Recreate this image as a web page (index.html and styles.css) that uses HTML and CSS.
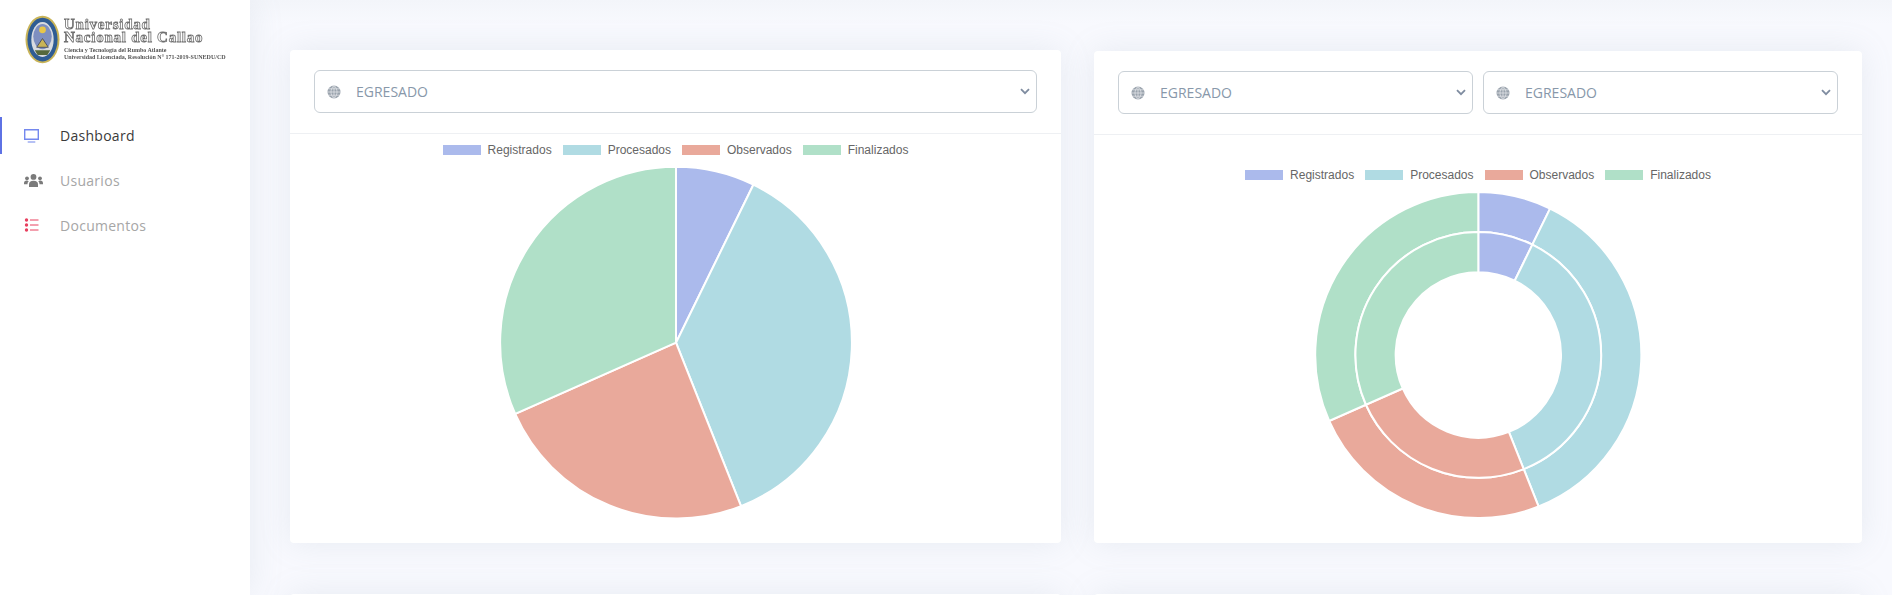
FILE: index.html
```html
<!DOCTYPE html>
<html lang="es">
<head>
<meta charset="utf-8">
<title>Dashboard</title>
<link rel="stylesheet" href="styles.css">
</head>
<body>
<div class="app">
  <aside class="sidebar">
    <div class="brand">
      <svg class="crest" width="35" height="49" viewBox="0 0 36 50">
        <ellipse cx="18" cy="25" rx="17.500" ry="24.500" fill="#c9b458"/>
        <ellipse cx="18" cy="25" rx="15.500" ry="22.500" fill="#2f5c93"/>
        <ellipse cx="18" cy="25" rx="11.500" ry="18" fill="#d8dbe0"/>
        <ellipse cx="18" cy="22" rx="9.500" ry="13" fill="#7e8fc0"/>
        <circle cx="18" cy="15" r="3.500" fill="#e7c64a"/>
        <path d="M18 24l6 9H12z" fill="#c9b458" stroke="#3a3f55" stroke-width=".8"/>
        <path d="M10 36h16l-3 5h-10z" fill="#55683c"/>
      </svg>
      <div class="brand-text">
        <div class="brand-title">Universidad<br>Nacional del Callao</div>
        <div class="brand-sub">Ciencia y Tecnología del Rumbo Atlante<br>Universidad Licenciada, Resolución N° 171-2019-SUNEDU/CD</div>
      </div>
    </div>
    <nav class="nav">
      <a class="nav-item active">
        <svg class="nav-icon" height="14" viewBox="0 0 36 14" preserveAspectRatio="xMinYMid meet"><path d="M.7.7h13.600v9.600H.7z" fill="#fff" stroke="#7488ee" stroke-width="1.400"/><path d="M3.700 13h7.600" stroke="#8fa0f0" stroke-width="1.300"/></svg>
        <span>Dashboard</span>
      </a>
      <a class="nav-item">
        <svg class="nav-icon" height="13" viewBox="0 0 36 13" preserveAspectRatio="xMinYMid meet" fill="#7b7b7b"><circle cx="9.500" cy="2.900" r="2.900"/><circle cx="3" cy="4.300" r="1.900"/><circle cx="16" cy="4.300" r="1.900"/><path d="M5 13v-2.800C5 8 6.500 6.700 9.500 6.700S14 8 14 10.200V13z"/><path d="M0 9.500C0 7.500 1 6.600 2.800 6.600c.9 0 1.400.3 1.900.7-.9.8-1.200 1.800-1.200 3H0zM19 9.500c0-2-1-2.900-2.800-2.900-.9 0-1.400.3-1.900.7.9.8 1.200 1.800 1.200 3H19z"/></svg>
        <span>Usuarios</span>
      </a>
      <a class="nav-item">
        <svg class="nav-icon" height="14" viewBox="0 0 36 14" preserveAspectRatio="xMinYMid meet"><g fill="#e8405f"><circle cx="2.500" cy="2" r="1.700"/><circle cx="2.500" cy="7" r="1.700"/><circle cx="2.500" cy="12" r="1.700"/></g><path d="M6 2h8.500M6 7h8.500M6 12h8.500" stroke="#e8405f" stroke-width="1"/></svg>
        <span>Documentos</span>
      </a>
    </nav>
  </aside>
  <main class="main">
    <section class="card card-left">
      <header class="card-head">
        <div class="field">
          <svg class="globe" width="14" height="14" viewBox="0 0 14 14"><use href="#globe"/></svg>
          <select class="select"><option>EGRESADO</option></select>
          <svg class="chev" width="10" height="7" viewBox="0 0 10 7"><path d="M1 1.200l4 4 4-4" fill="none" stroke="#7f8ca0" stroke-width="1.800"/></svg>
        </div>
      </header>
      <div class="chart chart-pie">
        <ul class="legend">
          <li><i class="sw blue"></i>Registrados</li>
          <li><i class="sw teal"></i>Procesados</li>
          <li><i class="sw salmon"></i>Observados</li>
          <li><i class="sw green"></i>Finalizados</li>
        </ul>
        <svg class="plot-pie" width="360" height="360" viewBox="-180 -179.700 360 360">
          <g stroke="#fff" stroke-width="2" transform="scale(1.005)">
            <path class="f-blue" d="M0 0V-175A175 175 0 0 1 77 -157.200Z"/>
            <path class="f-teal" d="M0 0L77 -157.200A175 175 0 0 1 64.700 162.600Z"/>
            <path class="f-salmon" d="M0 0L64.700 162.600A175 175 0 0 1 -160 70.900Z"/>
            <path class="f-green" d="M0 0L-160 70.900A175 175 0 0 1 0 -175Z"/>
          </g>
        </svg>
      </div>
    </section>
    <section class="card card-right">
      <header class="card-head two">
        <div class="field">
          <svg class="globe" width="14" height="14" viewBox="0 0 14 14"><use href="#globe"/></svg>
          <select class="select"><option>EGRESADO</option></select>
          <svg class="chev" width="10" height="7" viewBox="0 0 10 7"><path d="M1 1.200l4 4 4-4" fill="none" stroke="#7f8ca0" stroke-width="1.800"/></svg>
        </div>
        <div class="field">
          <svg class="globe" width="14" height="14" viewBox="0 0 14 14"><use href="#globe"/></svg>
          <select class="select"><option>EGRESADO</option></select>
          <svg class="chev" width="10" height="7" viewBox="0 0 10 7"><path d="M1 1.200l4 4 4-4" fill="none" stroke="#7f8ca0" stroke-width="1.800"/></svg>
        </div>
      </header>
      <div class="chart chart-donut">
        <ul class="legend">
          <li><i class="sw blue"></i>Registrados</li>
          <li><i class="sw teal"></i>Procesados</li>
          <li><i class="sw salmon"></i>Observados</li>
          <li><i class="sw green"></i>Finalizados</li>
        </ul>
        <svg class="plot-donut" width="330" height="330" viewBox="-165.300 -165 330 330">
          <g stroke="#fff" stroke-width="2" transform="scale(1.005)">
            <path class="f-blue" d="M0 -162.300A162.300 162.300 0 0 1 71.400 -145.700L53.800 -109.800A122.300 122.300 0 0 0 0 -122.300Z"/>
            <path class="f-teal" d="M71.400 -145.700A162.300 162.300 0 0 1 60 150.800L45.200 113.600A122.300 122.300 0 0 0 53.800 -109.800Z"/>
            <path class="f-salmon" d="M60 150.800A162.300 162.300 0 0 1 -148.400 65.700L-111.800 49.500A122.300 122.300 0 0 0 45.200 113.600Z"/>
            <path class="f-green" d="M-148.400 65.700A162.300 162.300 0 0 1 0 -162.300V-122.300A122.300 122.300 0 0 0 -111.800 49.500Z"/>
            <path class="f-blue" d="M0 -122.300A122.300 122.300 0 0 1 53.800 -109.800L36.200 -73.900A82.300 82.300 0 0 0 0 -82.300Z"/>
            <path class="f-teal" d="M53.800 -109.800A122.300 122.300 0 0 1 45.200 113.600L30.400 76.500A82.300 82.300 0 0 0 36.200 -73.900Z"/>
            <path class="f-salmon" d="M45.200 113.600A122.300 122.300 0 0 1 -111.800 49.500L-75.200 33.300A82.300 82.300 0 0 0 30.400 76.500Z"/>
            <path class="f-green" d="M-111.800 49.500A122.300 122.300 0 0 1 0 -122.300V-82.300A82.300 82.300 0 0 0 -75.200 33.300Z"/>
          </g>
        </svg>
      </div>
    </section>
    <div class="card next-card"></div>
    <div class="card next-card"></div>
  </main>
</div>
<svg class="defs" width="0" height="0">
  <symbol id="globe" viewBox="0 0 14 14">
    <circle cx="7" cy="7" r="6.500" fill="#9aa3ad"/>
    <path d="M7 .5v13M.5 7h13M1.500 3.800h11M1.500 10.200h11M7 .5C3 4 3 10 7 13.500M7 .5c4 3.500 4 9.500 0 13" fill="none" stroke="#e8eaee" stroke-width=".7"/>
  </symbol>
</svg>
</body>
</html>
```

FILE: styles.css
```css
* { box-sizing: border-box; }
html, body { margin: 0; height: 100%; }
body { font-family: "Open Sans", sans-serif; background: #f8f9fe; overflow: hidden; }
.app { display: flex; height: 595px; overflow: hidden; }
.sidebar { width: 250px; flex: none; background: #fff; box-shadow: 0 0 32px rgba(136,152,170,.15); position: relative; z-index: 1; }
.brand { display: flex; align-items: flex-start; gap: 4px; padding: 15px 0 0 25px; height: 117px; filter: blur(.4px); }
.crest { flex: none; }
.brand-text { padding-top: 3px; }
.brand-title { font-family: "Liberation Serif", serif; font-weight: 700; font-size: 15px; line-height: 13px; letter-spacing: .75px; white-space: nowrap; color: #fff; -webkit-text-stroke: .8px #6e6e6e; }
.brand-sub { font-family: "Liberation Serif", serif; font-weight: 700; font-size: 6px; line-height: 7px; margin-top: 2.500px; white-space: nowrap; color: #555; }
.nav { display: flex; flex-direction: column; }
.nav-item { display: flex; align-items: center; height: 44.800px; padding-left: 22px; font-size: 14px; letter-spacing: .28px; color: #a6a6a6; border-left: 2px solid transparent; }
.nav-item.active { height: 37px; margin-bottom: 4px; color: #3a3a3a; border-left-color: #5e72e4; }
.nav-icon { width: 36px; flex: none; }
.main { flex: 1; min-width: 0; display: grid; grid-template-columns: 771px 768px; column-gap: 33px; row-gap: 51px; padding: 50px 0 0 40px; align-items: start; background: linear-gradient(#f3f5fa, #f8f9fe 24px); }
.card { background: #fff; border-radius: 4px; height: 493px; box-shadow: 0 0 32px rgba(136,152,170,.15); display: flex; flex-direction: column; }
.card-right { margin-top: 1px; height: 492px; }
.card-head { display: flex; gap: 10px; padding: 20px 24px; border-bottom: 1px solid #eef0f3; height: 84px; }
.field { position: relative; flex: 1; height: 43px; }
.select { appearance: none; -webkit-appearance: none; display: block; width: 100%; height: 100%; background: #fff; border: 1px solid #cad1d7; border-radius: 6px; padding: 0 30px 0 41px; font: 14px "Open Sans", sans-serif; color: #8898aa; outline: 0; }
.globe { position: absolute; left: 13px; top: 15px; }
.chev { position: absolute; right: 7px; top: 18px; }
.defs { position: absolute; }
.chart { flex: 1; display: flex; flex-direction: column; align-items: center; }
.legend { list-style: none; margin: 0; padding: 0; display: flex; gap: 11px; font: 12px "Liberation Sans", sans-serif; color: #666; }
.legend li { display: flex; align-items: center; white-space: nowrap; height: 14px; }
.sw { width: 38px; height: 10px; margin-right: 7px; flex: none; }
.chart-pie { padding-top: 9px; }
.chart-donut { padding-top: 33px; }
.plot-pie { margin-top: 6px; }
.plot-donut { margin-top: 8px; }
.blue { background: #abbaec; } .teal { background: #b0dbe3; } .salmon { background: #e9a99b; } .green { background: #b0e0c8; }
.f-blue { fill: #abbaec; } .f-teal { fill: #b0dbe3; } .f-salmon { fill: #e9a99b; } .f-green { fill: #b0e0c8; }
```
